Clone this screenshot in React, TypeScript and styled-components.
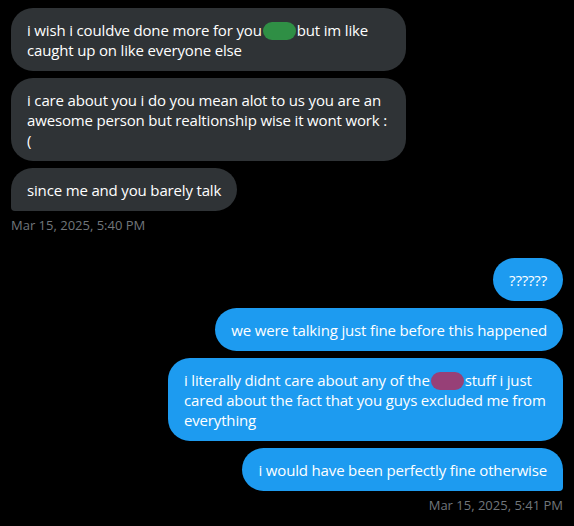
import React from 'react'
import styled, { createGlobalStyle } from 'styled-components'

const GlobalStyle = createGlobalStyle`
  html, body {
    margin: 0;
    padding: 0;
    background: #000000;
  }
  body {
    font-family: "Open Sans", "Noto Sans", sans-serif;
  }
`

const Page = styled.div`
  width: 574px;
  height: 526px;
  box-sizing: border-box;
  padding: 8px 11px 0 11px;
  background: #000000;
  display: flex;
  flex-direction: column;
  overflow: hidden;
`

const Group = styled.div<{ $mine?: boolean }>`
  display: flex;
  flex-direction: column;
  align-items: ${(p) => (p.$mine ? 'flex-end' : 'flex-start')};
  gap: 7px;
  margin-top: ${(p) => (p.$mine ? '25px' : '0')};
`

const Bubble = styled.div<{ $mine?: boolean; $last?: boolean }>`
  max-width: 363px;
  padding: 12px 16px 11px 16px;
  border-radius: 22px;
  background: ${(p) => (p.$mine ? '#1d9bf0' : '#2f3336')};
  color: #ffffff;
  font-size: 15px;
  line-height: 20px;
  letter-spacing: -0.16px;
  ${(p) => p.$last && (p.$mine ? 'border-bottom-right-radius: 4px;' : 'border-bottom-left-radius: 4px;')}
`

const Blob = styled.span<{ $color: string }>`
  display: inline-block;
  width: 33px;
  height: 18px;
  margin: 0 1px;
  border-radius: 9px;
  background: ${(p) => p.$color};
  vertical-align: -4px;
`

const Stamp = styled.div`
  margin-top: -1px;
  color: #71767b;
  font-size: 13px;
  line-height: 16px;
`

const App = () => {
  return (
    <>
      <GlobalStyle />
      <Page>
        <Group>
          <Bubble>
            i wish i couldve done more for you<Blob $color="#2f8f45" />but im like caught up on like everyone else
          </Bubble>
          <Bubble>
            i care about you i do you mean alot to us you are an awesome person but realtionship wise it wont work : (
          </Bubble>
          <Bubble $last>since me and you barely talk</Bubble>
          <Stamp>Mar 15, 2025, 5:40 PM</Stamp>
        </Group>
        <Group $mine>
          <Bubble $mine>??????</Bubble>
          <Bubble $mine>we were talking just fine before this happened</Bubble>
          <Bubble $mine>
            i literally didnt care about any of the<Blob $color="#974077" />stuff i just cared about the fact that you guys excluded me from everything
          </Bubble>
          <Bubble $mine $last>i would have been perfectly fine otherwise</Bubble>
          <Stamp>Mar 15, 2025, 5:41 PM</Stamp>
        </Group>
      </Page>
    </>
  )
}

export default App
